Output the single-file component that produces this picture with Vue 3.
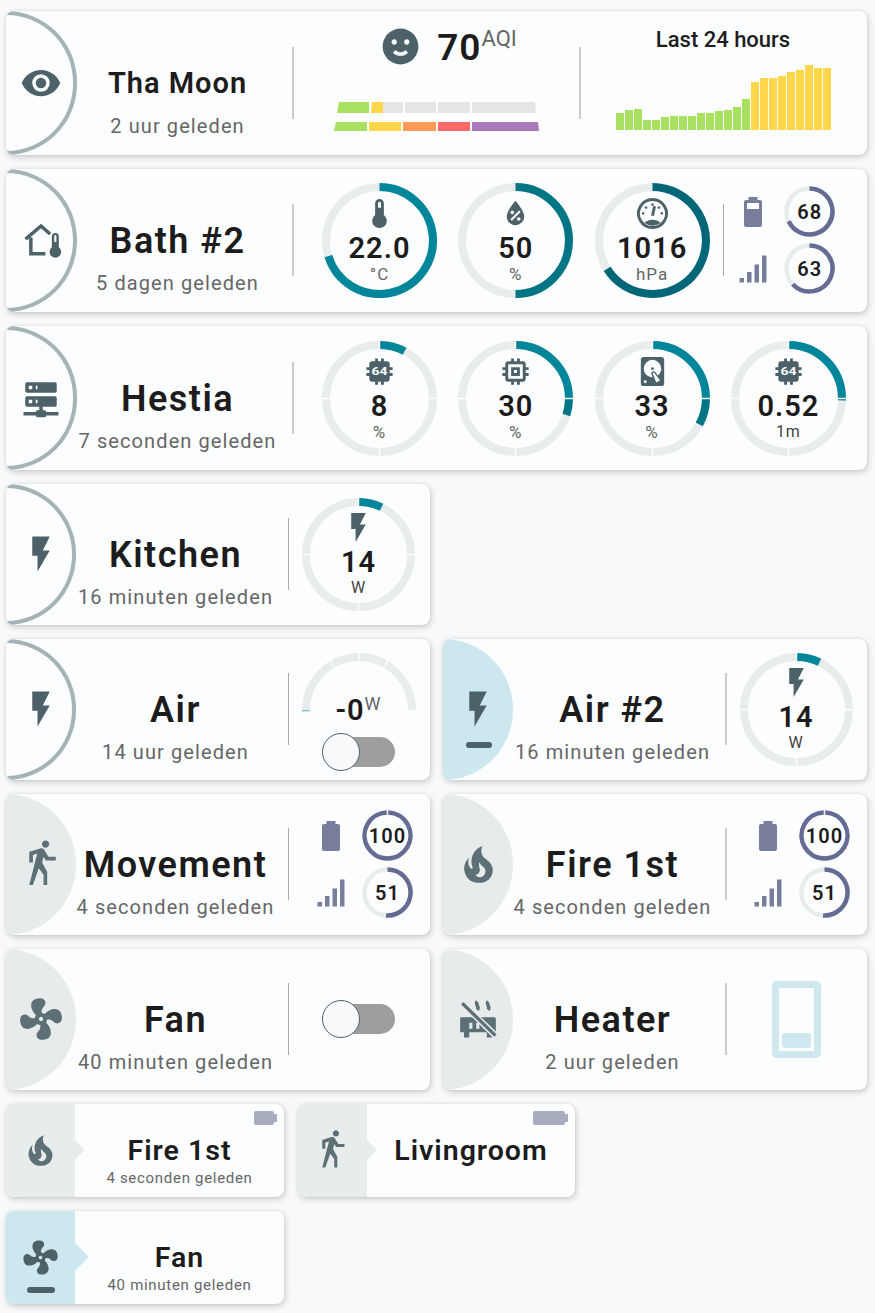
<template>
  <main class="page">
    <section class="big-grid">
      <article v-for="card in cards" :key="card.title + card.sub" class="card" :class="{ wide: card.wide, newline: card.newline }">
        <div class="badge" :class="card.badge">
          <Icon :name="card.icon" :size="card.iconSize || 42" :tone="card.badge === 'off' ? 'muted' : ''" />
          <span v-if="card.badge === 'on'" class="minus"></span>
        </div>

        <div class="label">
          <div class="title" :class="{ smaller: card.smaller }">{{ card.title }}</div>
          <div class="sub">{{ card.sub }}</div>
        </div>
        <div class="rule" :class="{ thin: card.thin }"></div>

        <!-- air quality + history -->
        <template v-if="card.aqi">
          <div class="aqi">
            <div class="aqi-head">
              <Icon name="happy" :size="43" />
              <span class="aqi-num">70</span><span class="aqi-unit">AQI</span>
            </div>
            <svg class="aqi-bars" width="206" height="30" viewBox="0 0 206 30">
              <polygon v-for="bar in aqiBars" :key="bar.points" :points="bar.points" :fill="bar.fill" />
            </svg>
          </div>
          <div class="rule"></div>
          <div class="history">
            <div class="history-title">Last 24 hours</div>
            <div class="history-bars">
              <span
                v-for="(val, i) in history"
                :key="i"
                class="hbar"
                :class="{ warn: i > 14 }"
                :style="{ height: val + 'px' }"
              ></span>
            </div>
          </div>
        </template>

        <div v-else class="extras" :class="card.extrasClass">
          <!-- round gauges -->
          <div v-for="g in card.gauges" :key="g.icon + g.value" class="gauge" :class="{ tight: !card.wide }">
            <svg viewBox="0 0 114 114">
              <path
                v-for="(seg, i) in gaugeArcs(g)"
                :key="i"
                :d="seg.d"
                :stroke="seg.color"
                stroke-width="8"
                fill="none"
              />
            </svg>
            <div class="gauge-text">
              <Icon :name="g.icon" :size="g.iconSize || 35" />
              <div class="gauge-val">{{ g.value }}</div>
              <div class="gauge-unit" :class="{ dark: g.unit === 'W' || g.unit === '1m' }">{{ g.unit }}</div>
            </div>
          </div>

          <div v-if="card.rings && card.gauges" class="rule thin after-gauges"></div>

          <!-- battery and signal -->
          <div v-if="card.rings" class="rings">
            <template v-for="r in card.rings" :key="r.icon">
              <Icon :name="r.icon" :size="36" tone="status" />
              <div class="ring">
                <svg viewBox="0 0 51 51">
                  <path :d="arc(0, 359.9, 23, 25.5)" stroke="#e9ecec" stroke-width="4.5" fill="none" />
                  <path :d="arc(r.full ? 2 : 0, r.full ? 358 : r.value * 3.6, 23, 25.5)" stroke="#666b94" stroke-width="4.5" fill="none" />
                </svg>
                <span>{{ r.value }}</span>
              </div>
            </template>
          </div>

          <!-- half gauge with switch -->
          <div v-if="card.arcSwitch" class="arc-switch">
            <div class="half">
              <svg width="114" height="59" viewBox="0 0 114 59">
                <path v-for="(a, i) in halfArcs" :key="i" :d="a" stroke="#e9ecec" stroke-width="8" fill="none" />
                <path :d="arc(-91.6, -90)" stroke="#7cc7d1" stroke-width="8" fill="none" />
              </svg>
              <div class="half-val">-0<sup>W</sup></div>
            </div>
            <div class="toggle"><span class="track"></span><span class="knob"></span></div>
          </div>

          <div v-if="card.toggle" class="toggle"><span class="track"></span><span class="knob"></span></div>

          <div v-if="card.boiler" class="boiler"><span></span></div>
        </div>
      </article>
    </section>

    <section class="small-grid">
      <article v-for="item in smallCards" :key="item.title" class="small" :class="{ active: item.active }">
        <div class="tab">
          <Icon :name="item.icon" :size="41" :tone="item.active ? '' : 'muted'" />
          <span v-if="item.active" class="minus"></span>
        </div>
        <div class="small-text">
          <div class="small-title">{{ item.title }}</div>
          <div class="small-sub">{{ item.sub }}</div>
        </div>
        <span v-if="item.batt" class="batt" :style="{ width: item.batt + 'px' }"></span>
      </article>
    </section>
  </main>
</template>

<script setup>
import { h } from 'vue'

const icons = {
  eye: { fill: 'M12,9A3,3 0 0,0 9,12A3,3 0 0,0 12,15A3,3 0 0,0 15,12A3,3 0 0,0 12,9M12,17A5,5 0 0,1 7,12A5,5 0 0,1 12,7A5,5 0 0,1 17,12A5,5 0 0,1 12,17M12,4.5C7,4.5 2.73,7.61 1,12C2.73,16.39 7,19.5 12,19.5C17,19.5 21.27,16.39 23,12C21.27,7.61 17,4.5 12,4.5Z' },
  flash: { fill: 'M7,2V13H10V22L17,10H13L17,2H7Z' },
  thermometer: { fill: 'M15 13V5A3 3 0 0 0 9 5V13A5 5 0 1 0 15 13M12 4A1 1 0 0 1 13 5V8H11V5A1 1 0 0 1 12 4Z' },
  homeTemp: {
    stroke: 'M3.2 11.5L12 4L17.2 8.6M6.2 10.5V19.8H14.5',
    fill: 'M18.2 16.2V10a2 2 0 0 1 4 0v6.2a3.3 3.3 0 1 1-4 0zM19.6 9.8v3.4h1.2V9.8a.6.6 0 0 0-1.2 0z'
  },
  waterPercent: { fill: 'M12,3.25C12,3.25 6,10 6,14C6,17.32 8.69,20 12,20A6,6 0 0,0 18,14C18,10 12,3.25 12,3.25M14.47,9.97L15.53,11.03L9.53,17.03L8.47,15.97M9.75,10A1.25,1.25 0 0,1 11,11.25A1.25,1.25 0 0,1 9.75,12.5A1.25,1.25 0 0,1 8.5,11.25A1.25,1.25 0 0,1 9.75,10M14.25,14.5A1.25,1.25 0 0,1 15.5,15.75A1.25,1.25 0 0,1 14.25,17A1.25,1.25 0 0,1 13,15.75A1.25,1.25 0 0,1 14.25,14.5Z' },
  gauge: {
    stroke: 'M12 2.4a9.6 9.6 0 1 1-0.01 0zM12 13.5L13.4 7',
    fill: 'M6.4 18.4C8 17 10 16.2 12 16.2s4 .8 5.6 2.2A9 9 0 0 1 6.4 18.4zM12 5a.9.9 0 1 1-.01 0zM7.6 7a.9.9 0 1 1-.01 0zM16.4 7a.9.9 0 1 1-.01 0zM5.6 11a.9.9 0 1 1-.01 0zM18.4 11a.9.9 0 1 1-.01 0z'
  },
  server: { fill: 'M13,19H14A1,1 0 0,1 15,20H22V22H15A1,1 0 0,1 14,23H10A1,1 0 0,1 9,22H2V20H9A1,1 0 0,1 10,19H11V17H4A1,1 0 0,1 3,16V12A1,1 0 0,1 4,11H20A1,1 0 0,1 21,12V16A1,1 0 0,1 20,17H13V19M4,3H20A1,1 0 0,1 21,4V8A1,1 0 0,1 20,9H4A1,1 0 0,1 3,8V4A1,1 0 0,1 4,3M9,7H10V5H9V7M9,15H10V13H9V15M5,5V7H7V5H5M5,13V15H7V13H5Z' },
  cpu64: {
    fill: 'M9,3V5H7A2,2 0 0,0 5,7V9H3V11H5V13H3V15H5V17A2,2 0 0,0 7,19H9V21H11V19H13V21H15V19H17A2,2 0 0,0 19,17V15H21V13H19V11H21V9H19V7A2,2 0 0,0 17,5H15V3H13V5H11V3H9Z',
    label: '64'
  },
  memory: { fill: 'M17,17H7V7H17M21,11V9H19V7C19,5.89 18.1,5 17,5H15V3H13V5H11V3H9V5H7C5.89,5 5,5.89 5,7V9H3V11H5V13H3V15H5V17A2,2 0 0,0 7,19H9V21H11V19H13V21H15V19H17A2,2 0 0,0 19,17V15H21V13H19V11M13,13H11V11H13M15,9H9V15H15V9Z' },
  disk: { fill: 'M6,2H18A2,2 0 0,1 20,4V20A2,2 0 0,1 18,22H6A2,2 0 0,1 4,20V4A2,2 0 0,1 6,2M12,4A6,6 0 0,0 6,10C6,13.31 8.69,16 12.1,16L11.22,13.77C10.95,13.29 11.11,12.68 11.59,12.4L12.45,11.9C12.93,11.63 13.54,11.79 13.82,12.27L15.74,14.69C17.12,13.59 18,11.9 18,10A6,6 0 0,0 12,4M12,9A1,1 0 0,1 13,10A1,1 0 0,1 12,11A1,1 0 0,1 11,10A1,1 0 0,1 12,9M7,18A1,1 0 0,0 6,19A1,1 0 0,0 7,20A1,1 0 0,0 8,19A1,1 0 0,0 7,18M12.09,13.27L14.58,19.58L17.17,18.08L12.95,12.77L12.09,13.27Z' },
  happy: { fill: 'M12,2A10,10 0 0,0 2,12A10,10 0 0,0 12,22A10,10 0 0,0 22,12A10,10 0 0,0 12,2M7,9.5C7,8.7 7.7,8 8.5,8C9.3,8 10,8.7 10,9.5C10,10.3 9.3,11 8.5,11C7.7,11 7,10.3 7,9.5M12,17.23C10.25,17.23 8.71,16.5 7.81,15.42L9.23,14C9.68,14.72 10.75,15.23 12,15.23C13.25,15.23 14.32,14.72 14.77,14L16.19,15.42C15.29,16.5 13.75,17.23 12,17.23M15.5,11C14.7,11 14,10.3 14,9.5C14,8.7 14.7,8 15.5,8C16.3,8 17,8.7 17,9.5C17,10.3 16.3,11 15.5,11Z' },
  walk: { fill: 'M14.12,10H19V8.2H15.38L13.38,4.87C13.08,4.37 12.54,4.03 11.92,4.03C11.74,4.03 11.58,4.06 11.42,4.11L6,5.8V11H7.8V7.33L9.91,6.67L6,22H7.8L10.67,13.89L13,17V22H14.8V15.59L12.31,11.05L13.04,8.18M14,3.8C15,3.8 15.8,3 15.8,2C15.8,1 15,0.2 14,0.2C13,0.2 12.2,1 12.2,2C12.2,3 13,3.8 14,3.8Z' },
  fire: { fill: 'M17.66 11.2C17.43 10.9 17.15 10.64 16.89 10.38C16.22 9.78 15.46 9.35 14.82 8.72C13.33 7.26 13 4.85 13.95 3C13 3.23 12.17 3.75 11.46 4.32C8.87 6.4 7.85 10.07 9.07 13.22C9.11 13.32 9.15 13.42 9.15 13.55C9.15 13.77 9 13.97 8.8 14.05C8.57 14.15 8.33 14.09 8.14 13.93C8.08 13.88 8.04 13.83 8 13.76C6.87 12.33 6.69 10.28 7.45 8.64C5.78 10 4.87 12.3 5 14.47C5.06 14.97 5.12 15.47 5.29 15.97C5.43 16.57 5.7 17.17 6 17.7C7.08 19.43 8.95 20.67 10.96 20.92C13.1 21.19 15.39 20.8 17.03 19.32C18.86 17.66 19.5 15 18.56 12.72L18.43 12.46C18.22 12 17.66 11.2 17.66 11.2M14.5 17.5C14.22 17.74 13.76 18 13.4 18.1C12.28 18.5 11.16 17.94 10.5 17.28C11.69 17 12.4 16.12 12.61 15.23C12.78 14.43 12.46 13.77 12.33 13C12.21 12.26 12.23 11.63 12.5 10.94C12.69 11.32 12.89 11.7 13.13 12C13.9 13 15.11 13.44 15.37 14.8C15.41 14.94 15.43 15.08 15.43 15.23C15.46 16.05 15.1 16.95 14.5 17.5H14.5Z' },
  fan: {
    turn: 'rotate(-16 12 12)',
    fill: 'M12,11A1,1 0 0,0 11,12A1,1 0 0,0 12,13A1,1 0 0,0 13,12A1,1 0 0,0 12,11M12.5,2C17,2 17.11,5.57 14.75,6.75C13.76,7.24 13.32,8.29 13.13,9.22C13.61,9.42 14.03,9.73 14.35,10.13C18.05,8.13 22.03,8.92 22.03,12.5C22.03,17 18.46,17.1 17.28,14.73C16.78,13.74 15.72,13.3 14.79,13.11C14.59,13.59 14.28,14 13.88,14.34C15.87,18.03 15.08,22 11.5,22C7,22 6.91,18.42 9.27,17.24C10.25,16.75 10.69,15.71 10.89,14.79C10.4,14.59 9.97,14.27 9.65,13.87C5.96,15.85 2,15.07 2,11.5C2,7 5.56,6.89 6.74,9.26C7.24,10.25 8.29,10.68 9.22,10.87C9.41,10.39 9.73,9.97 10.14,9.65C8.15,5.96 8.94,2 12.5,2Z'
  },
  radiatorOff: {
    fill: 'M3 11h18a1 1 0 0 1 1.2 1v7.5H20v3h-3v-3H7v3H4v-3H1.8V12A1 1 0 0 1 3 11zM7 14.2v3.3h1.8v-3.3zM11 14.2v3.3h1.8v-3.3zM15 14.2v3.3h1.8v-3.3z',
    stroke: 'M11.6 2c-1.6 1.7 1.6 2.6 0 4.8M17.8 2c-1.6 1.7 1.6 2.6 0 4.8',
    cut: 'M3 3L22 21.5',
    slash: 'M3 3L22 21.5'
  },
  batteryHalf: { fill: 'M16,10H8V6H16M16.67,4H15V2H9V4H7.33A1.33,1.33 0 0,0 6,5.33V20.66C6,21.4 6.6,22 7.33,22H16.67A1.33,1.33 0 0,0 18,20.67V5.33C18,4.6 17.4,4 16.67,4Z' },
  battery: { fill: 'M16.67,4H15V2H9V4H7.33A1.33,1.33 0 0,0 6,5.33V20.67C6,21.4 6.6,22 7.33,22H16.67A1.33,1.33 0 0,0 18,20.67V5.33C18,4.6 17.4,4 16.67,4Z' },
  signal: { fill: 'M3,21H6V18H3M8,21H11V14H8M13,21H16V9H13M18,21H21V3H18V21Z' }
}

const tones = { status: '#787d9b', muted: '#5d7076' }

const Icon = (props) => {
  const icon = icons[props.name]
  const color = tones[props.tone] || '#4c6268'
  const parts = [h('path', { d: icon.fill, fill: color, 'fill-rule': 'evenodd', transform: icon.turn })]
  if (icon.stroke) parts.push(h('path', { d: icon.stroke, fill: 'none', stroke: color, 'stroke-width': 2 }))
  if (icon.cut) {
    parts.push(h('path', { d: icon.cut, fill: 'none', stroke: '#e8ebec', 'stroke-width': 3.6 }))
    parts.push(h('path', { d: icon.slash, fill: 'none', stroke: color, 'stroke-width': 1.9 }))
  }
  if (icon.label) {
    parts.push(h('text', {
      x: 12, y: 14.7, fill: '#fcfdff', 'font-size': 8, 'font-weight': 700,
      textLength: 11, lengthAdjust: 'spacingAndGlyphs',
      'text-anchor': 'middle', 'font-family': 'Roboto, sans-serif'
    }, icon.label))
  }
  return h('svg', { class: 'icon', width: props.size, height: props.size, viewBox: '0 0 24 24', style: 'flex:none;display:block' }, parts)
}
Icon.props = ['name', 'size', 'tone']

// angle 0 is the top of the circle, going clockwise
function arc(from, to, r = 53, c = 57) {
  const point = (deg) => {
    const rad = (deg * Math.PI) / 180
    return [c + r * Math.sin(rad), c - r * Math.cos(rad)].map((n) => n.toFixed(2)).join(' ')
  }
  const large = to - from > 180 ? 1 : 0
  return `M${point(from)}A${r} ${r} 0 ${large} 1 ${point(to)}`
}

const track = '#e9ecec'

function gaugeArcs(g) {
  const segs = []
  if (g.split) {
    for (let q = 0; q < 4; q++) segs.push({ d: arc(q * 90 + 0.8, q * 90 + 89.2), color: track })
  } else {
    segs.push({ d: arc(0, 359.9), color: track })
  }
  g.fill.forEach(([a, b, color]) => segs.push({ d: arc(a, b), color }))
  return segs
}

const halfArcs = [arc(-90, -31), arc(-29.6, -0.8), arc(0.8, 29.6), arc(31, 90)]

const teal = '#00869a'
const tealDark = '#007585'

const statusRings = [
  { icon: 'battery', value: 100, full: true },
  { icon: 'signal', value: 51 }
]

const flashGauge = {
  icon: 'flash', value: '14', unit: 'W', split: true,
  fill: [[0.8, 26, teal]]
}

const cards = [
  {
    wide: true, aqi: true, badge: 'outlined', icon: 'eye',
    title: 'Tha Moon', sub: '2 uur geleden', smaller: true
  },
  {
    wide: true, badge: 'outlined', icon: 'homeTemp',
    title: 'Bath #2', sub: '5 dagen geleden',
    gauges: [
      { icon: 'thermometer', value: '22.0', unit: '°C', fill: [[0, 253, teal]] },
      { icon: 'waterPercent', value: '50', unit: '%', fill: [[0, 180, tealDark]] },
      { icon: 'gauge', value: '1016', unit: 'hPa', iconSize: 35, fill: [[0, 238, '#006678']] }
    ],
    rings: [
      { icon: 'batteryHalf', value: 68 },
      { icon: 'signal', value: 63 }
    ]
  },
  {
    wide: true, badge: 'outlined', icon: 'server',
    title: 'Hestia', sub: '7 seconden geleden',
    gauges: [
      { icon: 'cpu64', value: '8', unit: '%', split: true, fill: [[0.8, 28, teal]] },
      { icon: 'memory', value: '30', unit: '%', split: true, fill: [[0.8, 89.2, teal], [90.8, 108, tealDark]] },
      { icon: 'disk', value: '33', unit: '%', split: true, fill: [[0.8, 89.2, teal], [90.8, 119, tealDark]] },
      { icon: 'cpu64', value: '0.52', unit: '1m', split: true, fill: [[0.8, 89.2, teal], [90.8, 92, tealDark]] }
    ]
  },
  { badge: 'outlined', icon: 'flash', title: 'Kitchen', sub: '16 minuten geleden', thin: true, extrasClass: 'center', gauges: [flashGauge] },
  { badge: 'outlined', icon: 'flash', title: 'Air', sub: '14 uur geleden', thin: true, newline: true, extrasClass: 'center', arcSwitch: true },
  { badge: 'on', icon: 'flash', title: 'Air #2', sub: '16 minuten geleden', extrasClass: 'center', gauges: [flashGauge] },
  { badge: 'off', icon: 'walk', iconSize: 49, title: 'Movement', sub: '4 seconden geleden', thin: true, rings: statusRings, extrasClass: 'status' },
  { badge: 'off', icon: 'fire', iconSize: 49, title: 'Fire 1st', sub: '4 seconden geleden', rings: statusRings, extrasClass: 'status' },
  { badge: 'off', icon: 'fan', iconSize: 50, title: 'Fan', sub: '40 minuten geleden', thin: true, extrasClass: 'center', toggle: true },
  { badge: 'off', icon: 'radiatorOff', title: 'Heater', sub: '2 uur geleden', extrasClass: 'center', boiler: true }
]

const smallCards = [
  { icon: 'fire', title: 'Fire 1st', sub: '4 seconden geleden', batt: 20 },
  { icon: 'walk', title: 'Livingroom', sub: '', batt: 32 },
  { icon: 'fan', title: 'Fan', sub: '40 minuten geleden', active: true }
]

const history = [17, 20, 21, 10, 10, 13, 14, 14, 14, 17, 17, 19, 20, 23, 31, 48, 52, 52, 54, 58, 60, 65, 62, 62]

const aqiBars = [
  { points: '3,11 5,0 35,0 35,11', fill: '#a8e05f' },
  { points: '37,11 38,0 49,0 49,11', fill: '#fdd64b' },
  { points: '49,11 49,0 69,0 69,11', fill: '#e4e5e6' },
  { points: '71,11 71,0 102,0 102,11', fill: '#e4e5e6' },
  { points: '104,11 104,0 136,0 136,11', fill: '#e4e5e6' },
  { points: '138,11 138,0 201,0 202,11', fill: '#e4e5e6' },
  { points: '0,29 2,20 33,20 33,29', fill: '#a8e05f' },
  { points: '35,29 35,20 67,20 67,29', fill: '#fdd64b' },
  { points: '69,29 69,20 102,20 102,29', fill: '#ff9b57' },
  { points: '104,29 104,20 136,20 136,29', fill: '#fe6a69' },
  { points: '138,29 138,20 204,20 205,29', fill: '#a97abc' }
]
</script>

<style scoped>
.page {
  padding: 11px 8px 9px 6px;
  font-family: Roboto, sans-serif;
  color: #1c1c1c;
}

.big-grid {
  display: grid;
  grid-template-columns: 424px 424px;
  column-gap: 13px;
  row-gap: 14px;
}

.card {
  position: relative;
  display: flex;
  align-items: stretch;
  height: 141px;
  overflow: hidden;
  background: #fcfdff;
  border-radius: 8px;
  box-shadow: 1px 2px 6px rgba(0, 0, 0, 0.2), 0 0 2px rgba(0, 0, 0, 0.08);
}

.card.wide {
  grid-column: span 2;
  height: 143.67px;
}

.card.newline {
  grid-column: 1;
}

.badge {
  position: relative;
  flex: none;
  width: 70px;
  margin-right: -13px;
  display: flex;
  align-items: center;
  justify-content: center;
  box-sizing: border-box;
  border-radius: 0 72px 72px 0;
}

.wide .badge {
  width: 71px;
  margin-right: -14px;
}

.badge.outlined {
  padding-left: 3px;
  border: 4px solid #a5b3b6;
  border-left: 0;
}

.badge.off {
  background: #e8ebec;
}

.badge.on {
  background: #cde7ee;
}

.minus {
  position: absolute;
  left: 23px;
  bottom: 32px;
  width: 26px;
  height: 6px;
  border-radius: 3px;
  background: #4c6268;
}

.label {
  flex: none;
  width: 225px;
  display: flex;
  flex-direction: column;
  align-items: center;
  justify-content: center;
  padding-top: 33px;
  box-sizing: border-box;
  white-space: nowrap;
}

.wide .label {
  width: 229px;
}

.title {
  font-size: 36px;
  font-weight: 600;
  line-height: 44px;
  letter-spacing: 1.5px;
}

.title.smaller {
  margin: -1px 0 1px;
  font-size: 29px;
  letter-spacing: 1px;
}

.sub {
  margin-top: 9px;
  font-size: 20px;
  line-height: 22px;
  letter-spacing: 1.1px;
  color: #666;
}

.rule {
  flex: none;
  align-self: center;
  width: 2px;
  height: 72px;
  background: #ccc;
}

.rule.thin {
  width: 1px;
  background: #aaa;
}

.rule.after-gauges {
  margin-left: -8px;
}

.extras {
  flex: 1;
  display: flex;
  align-items: center;
  gap: 21.3px;
  padding-left: 28px;
}

.extras.center {
  padding-left: 0;
  padding-right: 2px;
  justify-content: center;
}

.extras.status {
  padding-left: 24px;
}

.rule:not(.thin) + .extras.status {
  padding-left: 23px;
}

.gauge {
  position: relative;
  flex: none;
  width: 115px;
  height: 115px;
}

.gauge.tight {
  width: 113px;
  height: 113px;
}

.gauge svg {
  display: block;
}

.gauge-text {
  position: absolute;
  inset: 0;
  display: flex;
  flex-direction: column;
  align-items: center;
  justify-content: center;
}

.gauge-val {
  margin-top: 2px;
  font-size: 29px;
  font-weight: 600;
  line-height: 30px;
  letter-spacing: 1px;
}

.gauge-unit {
  margin-top: 1px;
  font-size: 17px;
  line-height: 20px;
  letter-spacing: 1px;
  color: #666;
}

.gauge-unit.dark {
  font-size: 16px;
  color: #444;
}

.rings {
  display: grid;
  grid-template-columns: 36px 51px;
  column-gap: 13px;
  row-gap: 6px;
  align-items: center;
  justify-items: center;
}

.rule.after-gauges + .rings {
  margin-left: -10px;
}

.ring {
  position: relative;
  width: 51px;
  height: 51px;
}

.ring svg {
  display: block;
}

.ring span {
  position: absolute;
  inset: 0;
  display: flex;
  align-items: center;
  justify-content: center;
  font-size: 20px;
  font-weight: 600;
  letter-spacing: 1px;
}

.arc-switch {
  display: flex;
  flex-direction: column;
  align-items: center;
  margin-top: 6px;
}

.half {
  position: relative;
  width: 114px;
  height: 58px;
}

.half svg {
  display: block;
}

.half-val {
  position: absolute;
  left: 0;
  right: 0;
  bottom: -14px;
  text-align: center;
  font-size: 29px;
  font-weight: 600;
  line-height: 30px;
  letter-spacing: 1px;
}

.half-val sup {
  font-size: 18px;
  font-weight: 400;
  line-height: 0;
  vertical-align: 10px;
  color: #666;
}

.arc-switch .toggle {
  margin-top: 22px;
}

.toggle {
  position: relative;
  flex: none;
  width: 73px;
  height: 38px;
}

.track {
  position: absolute;
  left: 8px;
  right: 0;
  top: 4px;
  height: 30px;
  border-radius: 15px;
  background: #9e9e9e;
}

.knob {
  position: absolute;
  left: 0;
  top: 0;
  width: 38px;
  height: 38px;
  box-sizing: border-box;
  border: 1px solid #4c6268;
  border-radius: 50%;
  background: #f8f9fb;
}

.boiler {
  position: relative;
  width: 49px;
  height: 77px;
  box-sizing: border-box;
  border: 7px solid #cfe7ee;
  border-radius: 5px;
}

.boiler span {
  position: absolute;
  left: 3px;
  right: 3px;
  bottom: 3px;
  height: 15px;
  border-radius: 3px;
  background: #cfe7ee;
}

.aqi {
  flex: none;
  width: 285px;
  display: flex;
  flex-direction: column;
  align-items: center;
}

.aqi-head {
  display: flex;
  align-items: flex-start;
  height: 43px;
  margin: 14px 0 0 23px;
}

.aqi-num {
  margin-left: 15px;
  font-size: 37px;
  font-weight: 600;
  line-height: 46px;
  letter-spacing: 1px;
}

.aqi-unit {
  margin-top: 2px;
  font-size: 22px;
  line-height: 24px;
  color: #666;
}

.aqi-bars {
  display: block;
  margin-top: 34px;
}

.history {
  flex: 1;
  display: flex;
  flex-direction: column;
  align-items: center;
  padding-right: 2px;
}

.history-title {
  margin-top: 17px;
  font-size: 22px;
  font-weight: 500;
  line-height: 24px;
}

.history-bars {
  display: flex;
  align-items: flex-end;
  gap: 1px;
  height: 78px;
}

.hbar {
  width: 8px;
  background: #a8e05f;
}

.hbar.warn {
  background: #fdd64b;
}

.small-grid {
  display: grid;
  grid-template-columns: 278px 277px;
  column-gap: 14px;
  row-gap: 14px;
  margin-top: 14px;
}

.small {
  position: relative;
  display: flex;
  height: 93px;
  background: #fcfdff;
  border-radius: 8px;
  box-shadow: 1px 2px 6px rgba(0, 0, 0, 0.2), 0 0 2px rgba(0, 0, 0, 0.08);
}

.tab {
  position: relative;
  flex: none;
  width: 69px;
  display: flex;
  align-items: center;
  justify-content: center;
  background: #e9ecec;
  border-radius: 8px 0 0 8px;
}

.tab::after {
  content: '';
  position: absolute;
  left: 100%;
  top: 50%;
  margin-top: -10px;
  border-left: 10px solid #e9ecec;
  border-top: 10px solid transparent;
  border-bottom: 10px solid transparent;
}

.active .tab {
  background: #cde7ee;
}

.active .tab::after {
  margin-top: -14px;
  border-left: 14px solid #cde7ee;
  border-top-width: 14px;
  border-bottom-width: 14px;
}

.active .tab .minus {
  left: 21px;
  bottom: 11px;
  width: 28px;
}

.small-text {
  flex: 1;
  display: flex;
  flex-direction: column;
  align-items: center;
  justify-content: center;
  padding-top: 20px;
  box-sizing: border-box;
}

.small-title {
  font-size: 28.5px;
  font-weight: 600;
  line-height: 36px;
  letter-spacing: 1px;
  white-space: nowrap;
}

.small-sub {
  min-height: 18px;
  font-size: 15px;
  line-height: 18px;
  letter-spacing: 0.7px;
  color: #666;
}

.batt {
  position: absolute;
  top: 7px;
  right: 10px;
  height: 14px;
  border-radius: 2px;
  background: #a8acbf;
}

.batt::after {
  content: '';
  position: absolute;
  left: 100%;
  top: 3px;
  width: 3px;
  height: 8px;
  background: #a8acbf;
}
</style>

<style>
body {
  background: #f8f9fb;
}
</style>
